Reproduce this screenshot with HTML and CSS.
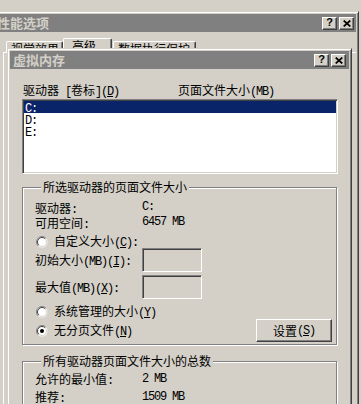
FILE: index.html
```html
<!DOCTYPE html>
<html>
<head>
<meta charset="utf-8">
<link rel="stylesheet" href="styles.css">
</head>
<body>
<div class="desk">
  <div class="win outer">
    <div class="title outer-title">
      <span class="title-text">性能选项</span>
      <div class="cap-btns">
        <span class="cap help">?</span>
        <span class="cap"><svg width="8" height="7" viewBox="0 0 8 7"><path d="M0.7 0.5 L7.3 6.5 M7.3 0.5 L0.7 6.5" stroke="#000" stroke-width="1.7" fill="none"/></svg></span>
      </div>
    </div>
    <div class="outer-body">
      <div class="tabs">
        <div class="tab t1">视觉效果</div>
        <div class="tab sel">高级</div>
        <div class="tab t3">数据执行保护</div>
      </div>
      <div class="panel"></div>
    </div>
  </div>

  <div class="win inner">
    <div class="title inner-title">
      <span class="title-text">虚拟内存</span>
      <div class="cap-btns">
        <span class="cap help">?</span>
        <span class="cap"><svg width="8" height="7" viewBox="0 0 8 7"><path d="M0.7 0.5 L7.3 6.5 M7.3 0.5 L0.7 6.5" stroke="#000" stroke-width="1.7" fill="none"/></svg></span>
      </div>
    </div>
    <div class="inner-body">
      <div class="list-head">
        <span>驱动器<span class="en"> [</span>卷标<span class="en">](<u>D</u>)</span></span>
        <span>页面文件大小<span class="en">(MB)</span></span>
      </div>
      <div class="listbox">
        <div class="row selected"><span class="en">C:</span></div>
        <div class="row"><span class="en">D:</span></div>
        <div class="row"><span class="en">E:</span></div>
      </div>

      <fieldset class="group g1">
        <legend>所选驱动器的页面文件大小</legend>
        <div class="kv"><span>驱动器<span class="en">:</span></span><span class="en">C:</span></div>
        <div class="kv"><span>可用空间<span class="en">:</span></span><span class="en">6457 MB</span></div>
        <div class="radio-row r-custom">
          <svg class="radio" width="12" height="12" viewBox="0 0 12 12"><circle cx="6" cy="6" r="5.5" fill="#fff"/><path d="M2.1 9.9 A5.5 5.5 0 0 1 9.9 2.1" stroke="#808080" fill="none"/><path d="M2.8 9.2 A4.5 4.5 0 0 1 9.2 2.8" stroke="#404040" fill="none"/><path d="M9.2 2.8 A4.5 4.5 0 0 1 2.8 9.2" stroke="#d4d0c8" fill="none"/></svg>
          <span>自定义大小<span class="en">(<u>C</u>):</span></span>
        </div>
        <div class="edit-row">
          <span class="edit-label">初始大小<span class="en">(MB)(<u>I</u>):</span></span>
          <span class="edit"></span>
        </div>
        <div class="edit-row second">
          <span class="edit-label">最大值<span class="en">(MB)(<u>X</u>):</span></span>
          <span class="edit"></span>
        </div>
        <div class="radio-row r-sys">
          <svg class="radio" width="12" height="12" viewBox="0 0 12 12"><circle cx="6" cy="6" r="5.5" fill="#fff"/><path d="M2.1 9.9 A5.5 5.5 0 0 1 9.9 2.1" stroke="#808080" fill="none"/><path d="M2.8 9.2 A4.5 4.5 0 0 1 9.2 2.8" stroke="#404040" fill="none"/><path d="M9.2 2.8 A4.5 4.5 0 0 1 2.8 9.2" stroke="#d4d0c8" fill="none"/></svg>
          <span>系统管理的大小<span class="en">(<u>Y</u>)</span></span>
        </div>
        <div class="last-row">
          <div class="radio-row">
            <svg class="radio" width="12" height="12" viewBox="0 0 12 12"><circle cx="6" cy="6" r="5.5" fill="#fff"/><path d="M2.1 9.9 A5.5 5.5 0 0 1 9.9 2.1" stroke="#808080" fill="none"/><path d="M2.8 9.2 A4.5 4.5 0 0 1 9.2 2.8" stroke="#404040" fill="none"/><path d="M9.2 2.8 A4.5 4.5 0 0 1 2.8 9.2" stroke="#d4d0c8" fill="none"/><circle cx="6" cy="6" r="2" fill="#000"/></svg>
            <span>无分页文件<span class="en">(<u>N</u>)</span></span>
          </div>
          <span class="button">设置<span class="en">(<u>S</u>)</span></span>
        </div>
      </fieldset>

      <fieldset class="group g2">
        <legend>所有驱动器页面文件大小的总数</legend>
        <div class="kv tall"><span>允许的最小值<span class="en">:</span></span><span class="en">2 MB</span></div>
        <div class="kv tall"><span>推荐<span class="en">:</span></span><span class="en">1509 MB</span></div>
      </fieldset>
    </div>
  </div>
</div>
</body>
</html>
```

FILE: styles.css
```css
html, body {
  margin: 0;
  padding: 0;
}
body {
  background: #d4d0c8;
  font-family: "Noto Sans CJK SC", "Noto Sans", sans-serif;
  font-size: 12px;
  color: #000;
  overflow: hidden;
}
.desk {
  position: relative;
  width: 361px;
  height: 404px;
  overflow: hidden;
}
.en {
  font-family: "Liberation Mono", monospace;
  font-size: 12px;
  letter-spacing: -1.2px;
}
u {
  text-decoration: underline;
  text-underline-offset: 1px;
}
.win {
  position: absolute;
  box-sizing: border-box;
  background: #d4d0c8;
  border: 1px solid;
  border-color: #d4d0c8 #404040 #404040 #d4d0c8;
  box-shadow: inset 1px 1px #fff, inset -1px -1px #808080;
  padding: 2px;
}
.outer {
  left: -7px;
  top: 11px;
  width: 366px;
  height: 420px;
}
.inner {
  left: 7px;
  top: 48px;
  width: 345px;
  height: 400px;
}
.title {
  height: 18px;
  background: #808080;
  display: flex;
  align-items: center;
  justify-content: space-between;
  box-sizing: border-box;
}
.outer-title {
  padding: 0 2px 0 1px;
}
.inner-title {
  padding: 0 3px 0 3px;
}
.title-text {
  color: #d4d0c8;
  font-weight: 700;
  font-size: 13px;
  line-height: 18px;
}
.cap-btns {
  display: flex;
  gap: 2px;
}
.cap {
  box-sizing: border-box;
  width: 15px;
  height: 13px;
  background: #d4d0c8;
  border: 1px solid;
  border-color: #fff #404040 #404040 #fff;
  box-shadow: inset -1px -1px #808080;
  display: flex;
  align-items: center;
  justify-content: center;
}
.help {
  font-family: "Liberation Sans", sans-serif;
  font-weight: 700;
  font-size: 11px;
  line-height: 11px;
  padding-bottom: 1px;
}
.outer-body {
  padding-top: 6px;
}
.tabs {
  display: flex;
  align-items: flex-end;
  height: 14px;
  margin-left: 10px;
}
.tab {
  box-sizing: border-box;
  border: 1px solid;
  border-bottom: none;
  border-color: #fff #404040 transparent #fff;
  box-shadow: inset -1px 0 #808080;
  border-radius: 2px 2px 0 0;
  font-size: 12px;
  line-height: 12px;
  padding: 1px 0 0 4px;
  height: 11px;
  white-space: nowrap;
  overflow: hidden;
}
.t1 {
  width: 57px;
}
.sel {
  width: 49px;
  height: 14px;
  padding-left: 8px;
}
.t3 {
  width: 83px;
  margin-left: 1px;
}
.panel {
  margin-left: 7px;
  height: 400px;
  border-top: 1px solid #fff;
  border-left: 1px solid #fff;
}
.inner-body {
  padding: 14px 11px 0 12px;
}
.list-head {
  display: grid;
  grid-template-columns: 155px 1fr;
  padding-left: 1px;
  height: 14px;
  line-height: 14px;
}
.listbox {
  margin-top: 2px;
  box-sizing: border-box;
  height: 75px;
  background: #fff;
  border: 1px solid;
  border-color: #808080 #fff #fff #808080;
  box-shadow: inset 1px 1px #404040, inset -1px -1px #d4d0c8;
  padding: 1px;
}
.row {
  height: 12px;
  line-height: 12px;
  padding-left: 1px;
}
.row.selected {
  background: #0a246a;
  color: #fff;
}
.group {
  margin: 6px 1px 0 0;
  border: 1px solid #808080;
  box-shadow: inset 1px 1px #fff, 1px 1px #fff;
  padding: 6px 4px 2px 12px;
  min-width: 0;
}
.group legend {
  margin-left: 6px;
  padding: 0 2px;
  line-height: 14px;
  background: #d4d0c8;
}
.kv {
  display: grid;
  grid-template-columns: 107px auto;
  height: 15px;
  line-height: 15px;
}
.kv.tall {
  height: 18px;
  line-height: 18px;
}
.radio-row {
  display: flex;
  align-items: center;
  gap: 6px;
  margin-left: 1px;
  line-height: 14px;
}
.r-custom {
  margin-top: 5px;
  height: 13px;
}
.r-sys {
  margin-top: 6px;
  height: 14px;
}
.radio {
  flex: none;
}
.edit-row {
  display: flex;
  align-items: center;
  height: 24px;
}
.edit-row.second {
  margin-top: 3px;
}
.edit-label {
  width: 107px;
  line-height: 14px;
  padding-top: 2px;
}
.edit {
  box-sizing: border-box;
  width: 60px;
  height: 24px;
  background: #d4d0c8;
  border: 1px solid;
  border-color: #808080 #fff #fff #808080;
  box-shadow: inset 1px 1px #404040, inset -1px -1px #d4d0c8;
}
.last-row {
  display: flex;
  align-items: center;
  justify-content: space-between;
  height: 23px;
}
.button {
  box-sizing: border-box;
  width: 76px;
  height: 23px;
  border: 1px solid;
  border-color: #fff #404040 #404040 #fff;
  box-shadow: inset -1px -1px #808080;
  display: flex;
  align-items: center;
  justify-content: center;
  line-height: 14px;
}
.g2 {
  margin-top: 9px;
  padding-top: 2px;
  padding-bottom: 0;
}
```
